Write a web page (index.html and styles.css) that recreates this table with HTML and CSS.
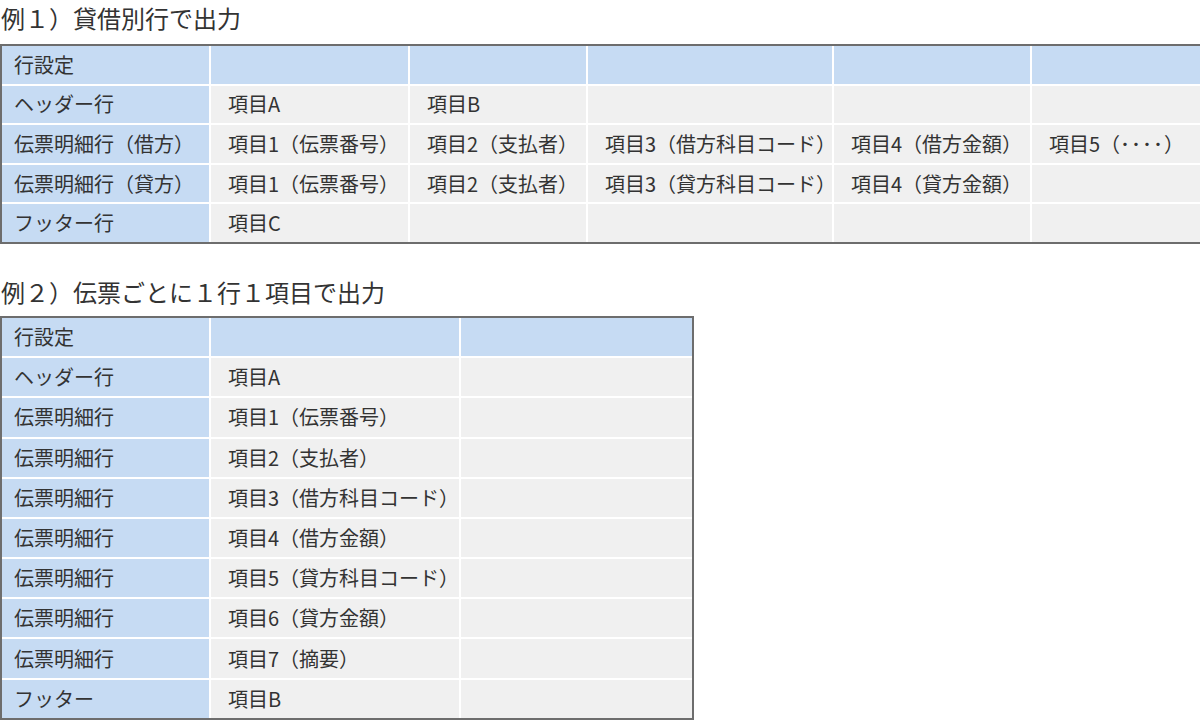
FILE: index.html
```html
<!DOCTYPE html>
<html lang="ja">
<head>
<meta charset="utf-8">
<link rel="stylesheet" href="styles.css">
</head>
<body>
<h2 class="title">例１）貸借別行で出力</h2>
<div class="grid grid-wide">
  <div class="cell head label">行設定</div>
  <div class="cell head"></div>
  <div class="cell head"></div>
  <div class="cell head"></div>
  <div class="cell head"></div>
  <div class="cell head"></div>

  <div class="cell label">ヘッダー行</div>
  <div class="cell">項目A</div>
  <div class="cell">項目B</div>
  <div class="cell"></div>
  <div class="cell"></div>
  <div class="cell"></div>

  <div class="cell label">伝票明細行（借方）</div>
  <div class="cell">項目1（伝票番号）</div>
  <div class="cell">項目2（支払者）</div>
  <div class="cell">項目3（借方科目コード）</div>
  <div class="cell">項目4（借方金額）</div>
  <div class="cell">項目5（<span class="dots">････</span>）</div>

  <div class="cell label">伝票明細行（貸方）</div>
  <div class="cell">項目1（伝票番号）</div>
  <div class="cell">項目2（支払者）</div>
  <div class="cell">項目3（貸方科目コード）</div>
  <div class="cell">項目4（貸方金額）</div>
  <div class="cell"></div>

  <div class="cell label">フッター行</div>
  <div class="cell">項目C</div>
  <div class="cell"></div>
  <div class="cell"></div>
  <div class="cell"></div>
  <div class="cell"></div>
</div>

<h2 class="title title-second">例２）伝票ごとに１行１項目で出力</h2>
<div class="grid grid-narrow">
  <div class="cell head label">行設定</div>
  <div class="cell head"></div>
  <div class="cell head"></div>

  <div class="cell label">ヘッダー行</div>
  <div class="cell">項目A</div>
  <div class="cell"></div>

  <div class="cell label">伝票明細行</div>
  <div class="cell">項目1（伝票番号）</div>
  <div class="cell"></div>

  <div class="cell label">伝票明細行</div>
  <div class="cell">項目2（支払者）</div>
  <div class="cell"></div>

  <div class="cell label">伝票明細行</div>
  <div class="cell">項目3（借方科目コード）</div>
  <div class="cell"></div>

  <div class="cell label">伝票明細行</div>
  <div class="cell">項目4（借方金額）</div>
  <div class="cell"></div>

  <div class="cell label">伝票明細行</div>
  <div class="cell">項目5（貸方科目コード）</div>
  <div class="cell"></div>

  <div class="cell label">伝票明細行</div>
  <div class="cell">項目6（貸方金額）</div>
  <div class="cell"></div>

  <div class="cell label">伝票明細行</div>
  <div class="cell">項目7（摘要）</div>
  <div class="cell"></div>

  <div class="cell label">フッター</div>
  <div class="cell">項目B</div>
  <div class="cell"></div>
</div>
</body>
</html>
```

FILE: styles.css
```css
html, body {
  margin: 0;
  padding: 0;
  background: #ffffff;
}

body {
  font-family: "Noto Sans CJK JP", "Noto Sans", sans-serif;
  color: #333333;
  overflow: hidden;
}

.title {
  font-size: 24px;
  font-weight: 400;
  line-height: 36px;
  margin: 0 0 8px 0;
  padding-left: 1px;
}

.title-second {
  margin-top: 30px;
  margin-bottom: 6px;
}

.grid {
  display: grid;
  gap: 2px;
  background: #ffffff;
  border: 2px solid #6d6d6d;
}

.grid-wide {
  width: 1198px;
  border-right: none;
  grid-template-columns: 207px 197px 176px 244px 196px 1fr;
  grid-auto-rows: 37.6px;
}

.grid-narrow {
  width: 690px;
  grid-template-columns: 207px 248px 231px;
  grid-auto-rows: 38.2px;
}

.cell {
  background: #f0f0f0;
  font-size: 20px;
  line-height: 1;
  display: flex;
  align-items: center;
  padding-left: 17px;
  white-space: nowrap;
}

.label {
  background: #c6dbf3;
  padding-left: 12px;
}

.head {
  background: #c6dbf3;
}

.dots {
  letter-spacing: 1px;
}
```
